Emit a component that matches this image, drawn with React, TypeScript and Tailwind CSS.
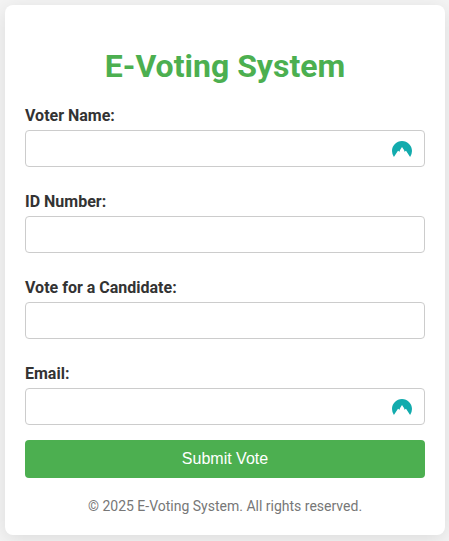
import React from "react";

const fields = [
  { id: "name", label: "Voter Name:", icon: true },
  { id: "idNumber", label: "ID Number:", icon: false },
  { id: "candidate", label: "Vote for a Candidate:", icon: false },
  { id: "email", label: "Email:", icon: true },
];

function PeakIcon() {
  return (
    <svg className="absolute top-[11px] right-[13px] h-4 w-5" viewBox="0 2.4 24 19.2">
      <path
        fill="#12abad"
        d="M2.2838 21.5409A11.9866 11.9866 0 0 1 0 14.4832C0 7.8418 5.3727 2.4586 12 2.4586c6.6279 0 12 5.3832 12 12.0246a11.9853 11.9853 0 0 1-2.2838 7.0577l-4.9-7.4-1.9 1.2-.3-1.9L12 9.6l-2.5 3.9-.3 1.9-2-1.2z"
      />
    </svg>
  );
}

export default function App() {
  return (
    <div className="h-[541px] w-[449px] overflow-hidden bg-[#f4f4f4] pt-[5px] pl-[5px] font-['Roboto',sans-serif] text-[#333]">
      <div className="h-[530px] w-[440px] rounded-lg bg-white px-5 pt-[42px] shadow-[0_4px_20px_rgba(0,0,0,0.1)]">
        <h1 className="mb-[21px] text-center text-[32px] leading-[38px] font-bold text-[#4caf50]">
          E-Voting System
        </h1>
        <form>
          <div className="flex flex-col gap-[25px]">
            {fields.map((f) => (
              <div key={f.id}>
                <label htmlFor={f.id} className="mb-1 block text-base leading-5 font-bold">
                  {f.label}
                </label>
                <div className="relative">
                  <input id={f.id} className="block h-[37px] w-full rounded border border-[#ccc] px-2.5" />
                  {f.icon && <PeakIcon />}
                </div>
              </div>
            ))}
          </div>
          <button
            type="button"
            className="mt-[15px] block h-[38px] w-full rounded bg-[#4caf50] font-['Liberation_Sans',sans-serif] text-base text-white"
          >
            Submit Vote
          </button>
        </form>
        <p className="mt-5 text-center text-[14px] leading-[16px] text-[#777]">
          © 2025 E-Voting System. All rights reserved.
        </p>
      </div>
    </div>
  );
}
